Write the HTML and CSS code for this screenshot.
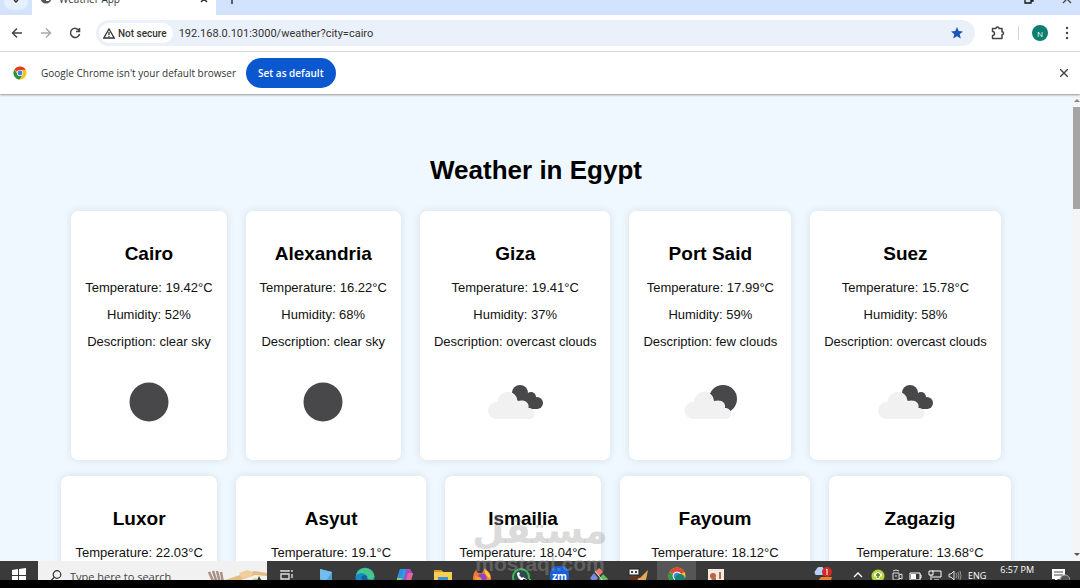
FILE: index.html
```html
<!DOCTYPE html>
<html lang="en">
<head>
    <meta charset="UTF-8">
    <title>Weather App</title>
    <link rel="stylesheet" href="styles.css">
</head>
<body>
    <div class="tab-strip">
        <button class="tab-search" aria-label="Search tabs"><svg width="10" height="6" viewBox="0 0 10 6"><path d="M3 0l2 2 2-2" fill="none" stroke="#333" stroke-width="1.5"/></svg></button>
        <div class="tab">
            <svg class="tab-icon" width="12" height="12" viewBox="0 0 12 12"><circle cx="6" cy="6" r="5.5" fill="#555"/><path d="M6 1l4 2-1 3-3-1zM6 6l4 0-1 3-3 0z" fill="#fff"/></svg>
            <span class="tab-title">Weather App</span>
            <button class="tab-close" aria-label="Close tab"><svg width="8" height="8" viewBox="0 0 8 8"><path d="M1 1l6 6M7 1l-6 6" stroke="#333" stroke-width="1.5"/></svg></button>
        </div>
        <button class="new-tab" aria-label="New tab"><svg width="10" height="10" viewBox="0 0 10 10"><path d="M5 0v10M0 5h10" stroke="#333" stroke-width="1.5"/></svg></button>
        <div class="window-buttons">
            <button aria-label="Restore"><svg width="10" height="10" viewBox="0 0 10 10"><path d="M1 3h6v6H1zM3 3V1h6v6H7" fill="none" stroke="#111" stroke-width="1.3"/></svg></button>
            <button aria-label="Close"><svg width="10" height="10" viewBox="0 0 10 10"><path d="M1 1l8 8M9 1L1 9" stroke="#444" stroke-width="1.3"/></svg></button>
        </div>
    </div>

    <div class="toolbar">
        <button aria-label="Back"><svg width="12" height="12" viewBox="0 0 12 12"><path d="M11 6H2M6 1.5L1.5 6 6 10.5" fill="none" stroke="#444" stroke-width="1.5"/></svg></button>
        <button aria-label="Forward"><svg width="12" height="12" viewBox="0 0 12 12"><path d="M1 6h9M6 1.5L10.5 6 6 10.5" fill="none" stroke="#aaa" stroke-width="1.5"/></svg></button>
        <button aria-label="Reload"><svg width="12" height="12" viewBox="0 0 12 12"><path d="M10 3.5A4.6 4.6 0 1 0 10.6 7M10.5 1v3.5H7" fill="none" stroke="#444" stroke-width="1.5"/></svg></button>
        <div class="omnibox">
            <button class="site-info">
                <svg width="12" height="11" viewBox="0 0 12 11"><path d="M6 1L11.2 10H.8z" fill="none" stroke="#333" stroke-width="1.3"/><path d="M6 4v3M6 7.8v1.2" stroke="#333" stroke-width="1.3"/></svg>
                Not secure
            </button>
            <input class="url" type="text" aria-label="Address" value="192.168.0.101:3000/weather?city=cairo">
            <button aria-label="Bookmark"><svg width="12" height="12" viewBox="0 0 12 12"><path d="M6 0l1.7 4.1 4.3.3-3.3 2.8 1.1 4.3L6 9.2l-3.8 2.3 1.1-4.3L0 4.4l4.3-.3z" fill="#1a56b8"/></svg></button>
        </div>
        <button aria-label="Extensions"><svg width="14" height="14" viewBox="0 0 14 14"><path d="M1.5 2.5H5a1.5 1.5 0 0 1 3 0h3v3.2a1.5 1.5 0 0 1 0 3V12.5H1.5V9.500a2 2 0 0 0 0-4z" fill="none" stroke="#444" stroke-width="1.5" stroke-linejoin="round"/></svg></button>
        <span class="divider"></span>
        <button class="avatar" aria-label="Profile">N</button>
        <button aria-label="Menu"><svg width="4" height="14" viewBox="0 0 4 14"><circle cx="2" cy="2" r="1.2" fill="#444"/><circle cx="2" cy="7" r="1.2" fill="#444"/><circle cx="2" cy="12" r="1.2" fill="#444"/></svg></button>
    </div>

    <div class="infobar">
        <svg width="14" height="14" viewBox="0 0 14 14"><circle cx="7" cy="7" r="6.5" fill="#fbc116"/><path d="M7 7L1.4 3.7A6.5 6.5 0 0 1 12.6 3.7L7 4z" fill="#e33b2e"/><path d="M1.4 3.7A6.5 6.5 0 0 0 6.5 13.5L9.6 8.5 4.4 8.5z" fill="#229342"/><circle cx="7" cy="7" r="3.1" fill="#fff"/><circle cx="7" cy="7" r="2.4" fill="#3f7de8"/></svg>
        <span class="infobar-text">Google Chrome isn't your default browser</span>
        <button class="default-btn">Set as default</button>
        <button class="infobar-close" aria-label="Dismiss"><svg width="8" height="8" viewBox="0 0 8 8"><path d="M0 0l8 8M8 0L0 8" stroke="#444" stroke-width="1.4"/></svg></button>
    </div>

    <div class="viewport">
        <main class="page">
            <h1>Weather in Egypt</h1>
            <div class="row">
                <div class="card">
                    <h2>Cairo</h2>
                    <p>Temperature: 19.42°C</p>
                    <p>Humidity: 52%</p>
                    <p>Description: clear sky</p>
                    <svg class="weather-icon" viewBox="0 0 82 82"><circle cx="41" cy="41" r="19.5" fill="#48484a"/></svg>
                </div>
                <div class="card">
                    <h2>Alexandria</h2>
                    <p>Temperature: 16.22°C</p>
                    <p>Humidity: 68%</p>
                    <p>Description: clear sky</p>
                    <svg class="weather-icon" viewBox="0 0 82 82"><circle cx="41" cy="41" r="19.5" fill="#48484a"/></svg>
                </div>
                <div class="card">
                    <h2>Giza</h2>
                    <p>Temperature: 19.41°C</p>
                    <p>Humidity: 37%</p>
                    <p>Description: overcast clouds</p>
                    <svg class="weather-icon" viewBox="0 0 82 82"><g fill="#48484a"><circle cx="46" cy="32" r="8"/><circle cx="57" cy="36" r="5"/><circle cx="63" cy="42" r="6"/><path d="M42 32h16l6 16H46z"/></g><path d="M22.500 58a8.500 8.500 0 0 1 0-17l1 0c0-9 13-15 19-5l1 4c8-2 12 2 11 7 8 0 8 11 0 11z" fill="#f1f1f1"/></svg>
                </div>
                <div class="card">
                    <h2>Port Said</h2>
                    <p>Temperature: 17.99°C</p>
                    <p>Humidity: 59%</p>
                    <p>Description: few clouds</p>
                    <svg class="weather-icon" viewBox="0 0 82 82"><circle cx="54" cy="38" r="14" fill="#48484a"/><path d="M24 58a8.500 8.500 0 0 1 0-17l1 0c0-9 13-15 19-5l1 4c8-2 12 2 11 7 8 0 8 11 0 11z" fill="#f1f1f1"/></svg>
                </div>
                <div class="card">
                    <h2>Suez</h2>
                    <p>Temperature: 15.78°C</p>
                    <p>Humidity: 58%</p>
                    <p>Description: overcast clouds</p>
                    <svg class="weather-icon" viewBox="0 0 82 82"><g fill="#48484a"><circle cx="46" cy="32" r="8"/><circle cx="57" cy="36" r="5"/><circle cx="63" cy="42" r="6"/><path d="M42 32h16l6 16H46z"/></g><path d="M22.500 58a8.500 8.500 0 0 1 0-17l1 0c0-9 13-15 19-5l1 4c8-2 12 2 11 7 8 0 8 11 0 11z" fill="#f1f1f1"/></svg>
                </div>
            </div>
            <div class="row">
                <div class="card">
                    <h2>Luxor</h2>
                    <p>Temperature: 22.03°C</p>
                    <p>Description: clear sky</p>
                </div>
                <div class="card">
                    <h2>Asyut</h2>
                    <p>Temperature: 19.1°C</p>
                    <p>Description: overcast clouds</p>
                </div>
                <div class="card">
                    <h2>Ismailia</h2>
                    <p>Temperature: 18.04°C</p>
                    <p>Description: clear sky</p>
                </div>
                <div class="card">
                    <h2>Fayoum</h2>
                    <p>Temperature: 18.12°C</p>
                    <p>Description: overcast clouds</p>
                </div>
                <div class="card">
                    <h2>Zagazig</h2>
                    <p>Temperature: 13.68°C</p>
                    <p>Description: broken clouds</p>
                </div>
            </div>
        </main>
        <div class="scrollbar">
            <svg width="7" height="5" viewBox="0 0 7 5"><path d="M1 4l3-3 3 3z" fill="#888"/></svg>
            <div class="thumb"></div>
            <svg width="7" height="5" viewBox="0 0 7 5"><path d="M1 1l3 3 3-3z" fill="#555"/></svg>
        </div>
    </div>

    <div class="taskbar">
        <button class="start" aria-label="Start"><svg width="14" height="14" viewBox="0 0 14 14"><path d="M0 2l6-1v6H0zM7 1l7-1v7H7zM0 8h6v6H0zM7 8h7v6H7z" fill="#fff"/></svg></button>
        <div class="search">
            <svg width="12" height="12" viewBox="0 0 12 12"><circle cx="7" cy="4.5" r="3.8" fill="none" stroke="#333" stroke-width="1.2"/><path d="M4.3 7.3L0 11.5" stroke="#333" stroke-width="1.2"/></svg>
            <input type="text" aria-label="Search" placeholder="Type here to search">
            <svg width="60" height="14" viewBox="0 0 60 14"><path d="M2 3l5 11M6 2l4 12M10 2l3 12M14 3l2 11" stroke="#a98f84" stroke-width="2.5"/><path d="M18 11L36 5l12-3 12 2v3L48 6 34 11l-10 3z" fill="#e5bd83"/><path d="M32 4l8-3 6 2-2 4-9 3z" fill="#efcf9c"/><path d="M40 14l8-5 12 5z" fill="#d9c28c"/><path d="M49 14l3-7 4 7z" fill="#3d4526"/></svg>
        </div>
        <div class="apps">
            <button aria-label="Task view"><svg width="14" height="14" viewBox="0 0 14 14"><path d="M1 1v1h8V1M1 5h8v5H1zM1 14v-2h8v2M12 1v2M12 5v4M12 11v3" fill="none" stroke="#ddd" stroke-width="1.4"/></svg></button>
            <button aria-label="Remote desktop"><svg width="14" height="16" viewBox="0 0 14 16"><path d="M1 1l12 3v12L1 12z" fill="#4b9fdd"/><path d="M1 1l12 3-6 9-6-2z" fill="#72bdec"/></svg></button>
            <button aria-label="Edge"><svg width="20" height="18" viewBox="0 0 20 18"><circle cx="10" cy="10" r="9.5" fill="#1689ce"/><path d="M1 8a9.500 9.500 0 0 1 18.500 1c0 4-5 4-7 3 1-5-6-8-11.500-4z" fill="#46c78a"/><path d="M7 9c4-2 6 0 5 3l7 2H8c-2-1-2-4-1-5z" fill="#155f9d"/></svg></button>
            <button aria-label="Copilot"><svg width="18" height="16" viewBox="0 0 18 16"><path d="M5 1h7L8 16H1z" fill="#25a4d9"/><path d="M5 1h4L6 10H2z" fill="#318ce5"/><path d="M11 1h4l3 5-3 10H8z" fill="#a54acf"/><path d="M13 5h5l-3 11h-5z" fill="#e66691"/><path d="M2 10h5l-2 6H2z" fill="#9dcc54"/></svg></button>
            <button aria-label="File Explorer"><svg width="18" height="15" viewBox="0 0 18 15"><path d="M0 1h7l2 2h9v12H0z" fill="#f8ce54"/><path d="M0 1h7l2 2H0z" fill="#d99926"/><path d="M4 8h10v7H4z" fill="#3e91d6"/></svg></button>
            <button aria-label="Firefox"><svg width="18" height="16" viewBox="0 0 18 16"><path d="M9 5l3-5c2 3 6 4 6 10 0 8-17 9-18 1C0 7 1 4 3 2l2 3z" fill="#f57635"/><path d="M11 1c3 2 7 5 6 10L13 7z" fill="#ffce45"/><circle cx="9" cy="10" r="4.5" fill="#8648c4"/><path d="M2 8l5 1 3 4-7 2z" fill="#ff9830"/></svg></button>
            <button aria-label="WhatsApp"><svg width="20" height="16" viewBox="0 0 20 16"><circle cx="10" cy="9" r="8" fill="#32494b" stroke="#37b858" stroke-width="2"/><path d="M6 5c0 5 3 8 8 8l1-2-3-2-1 1-3-3 1-1-1-2z" fill="#fff"/><path d="M12 11h8v5h-8z" fill="#333"/><path d="M14 12h2v3M18 12h2v3" fill="none" stroke="#fff"/></svg></button>
            <button class="zoom-app" aria-label="Zoom">zm</button>
            <button aria-label="Android tools"><svg width="18" height="16" viewBox="0 0 18 16"><path d="M5 4l4-4 4 4-4 4z" fill="#ed7b67"/><path d="M0 10l4-5 4 5-4 5z" fill="#738edc"/><path d="M9 11l4-5 5 5-4 5z" fill="#67b860"/><path d="M5 3l8 10" stroke="#ddd"/></svg></button>
            <button aria-label="Paint tool"><svg width="20" height="16" viewBox="0 0 20 16"><path d="M3 7l9 3 8-8-2 10-9 4z" fill="#e8a957"/><path d="M2 7l9 2-3 6-6-4z" fill="#673319"/><path d="M1 1h10v6H1z" fill="#eee" stroke="#222"/><path d="M3 3h2v2H3zM7 3h2v2H7z" fill="#444"/></svg></button>
            <button class="active" aria-label="Chrome"><svg width="18" height="18" viewBox="0 0 18 18"><circle cx="9" cy="9" r="8.5" fill="#f4c42d"/><path d="M9 9L1.5 5A8.5 8.5 0 0 1 16.5 5z" fill="#df4836"/><path d="M1.5 5A8.5 8.5 0 0 0 8 17.5l3-6z" fill="#299b4b"/><circle cx="9" cy="9" r="4" fill="#438bdc" stroke="#fff"/><circle cx="12" cy="12" r="5" fill="#168174"/></svg></button>
            <button aria-label="Camera app"><svg width="18" height="14" viewBox="0 0 18 14"><path d="M1 0h16v14H1z" fill="#f6e9e2"/><circle cx="6" cy="7" r="3" fill="#ba6443"/><path d="M5 9h4v5H4zM12 3h2v7h-2z" fill="#b76c50"/></svg></button>
        </div>
        <div class="tray">
            <svg width="20" height="16" viewBox="0 0 20 16"><path d="M4 15l4-5h11l-2 6H8z" fill="#e98332"/><path d="M3 8a3 3 0 0 1 0-5c2-5 8-4 8 0 4 0 4 5 0 5z" fill="#b6d0ff"/><circle cx="14" cy="5" r="5" fill="#cf2b26"/><path d="M14 2v6M13 3l1-1" stroke="#fff"/></svg>
            <svg class="tray-arrow" width="10" height="8" viewBox="0 0 10 8"><path d="M1 6l4-4 4 4" fill="none" stroke="#fff" stroke-width="1.3"/></svg>
            <svg width="14" height="12" viewBox="0 0 14 12"><circle cx="7" cy="7" r="6.5" fill="#b4d636"/><path d="M7 3v7M3 6h8" stroke="#fff" stroke-width="3"/><path d="M7 4v5M5 6h4" stroke="#477c1f" stroke-width="1.5"/></svg>
            <svg width="12" height="12" viewBox="0 0 12 12"><path d="M2 4h6v7H2zM8 6l3-1v5L8 9M2 2q3-2 6 0M4 7h2" fill="none" stroke="#ddd"/></svg>
            <svg width="13" height="12" viewBox="0 0 13 12"><path d="M1 4h10v7H1zM11 6h1v3h-1" fill="none" stroke="#fff"/><path d="M2 5h5v5H2z" fill="#fff"/></svg>
            <svg width="14" height="12" viewBox="0 0 14 12"><path d="M4 2h9v6H4M1 2h4v4H1zM3 6v5M6 11h5" fill="none" stroke="#fff"/></svg>
            <svg width="14" height="12" viewBox="0 0 14 12"><path d="M1 5h2l3-3v9L3 8H1z" fill="none" stroke="#ddd"/><path d="M8 4q2 3 0 5M10 3q2 4 0 7M12 2q2 5 0 9" fill="none" stroke="#999"/></svg>
            <span class="lang">ENG</span>
            <time>6:57 PM</time>
            <svg width="18" height="14" viewBox="0 0 18 14"><path d="M0 1h13v10H6l-3 3v-3H0z" fill="#fff"/><path d="M2 4h9M2 7h9" stroke="#444"/><circle cx="13" cy="12" r="5" fill="#555" stroke="#aaa"/></svg>
        </div>
    </div>

    <div class="watermark">
        <span class="watermark-ar" lang="ar" dir="rtl">مستقل</span>
        <span class="watermark-en">mostaql.com</span>
    </div>
</body>
</html>
```

FILE: styles.css
```css
* {
	box-sizing: border-box;
}

body {
	margin: 0;
	height: 100vh;
	display: flex;
	flex-direction: column;
	overflow: hidden;
	position: relative;
	background-color: #000;
	font-family: "Open Sans", "Noto Sans", sans-serif;
	font-size: 11px;
	color: #333;
}

button {
	display: flex;
	align-items: center;
	justify-content: center;
	flex-shrink: 0;
	border: none;
	background: none;
	padding: 0;
	font-family: inherit;
	font-size: inherit;
	color: inherit;
}

svg {
	display: block;
	flex-shrink: 0;
}

input {
	border: none;
	background: none;
	padding: 0;
	min-width: 0;
	font-family: inherit;
	color: inherit;
}

/* browser */
.tab-strip {
	height: 15px;
	flex-shrink: 0;
	display: flex;
	align-items: flex-start;
	background-color: #d3e3fd;
	overflow: hidden;
}

.tab-search {
	width: 24px;
	height: 10px;
	margin-left: 4px;
	align-items: flex-start;
	border-radius: 0 0 8px 8px;
	background-color: #e6effd;
}

.tab {
	width: 184px;
	height: 15px;
	margin-left: 4px;
	padding: 0 8px;
	display: flex;
	align-items: flex-start;
	background-color: #fff;
}

.tab-icon {
	margin-top: -8px;
}

.tab-title {
	flex: 1;
	margin: -8px 0 0 7px;
	line-height: 14px;
	font-size: 10px;
}

.tab-close {
	margin-top: -5px;
}

.new-tab {
	margin: -6px 0 0 11px;
}

.window-buttons {
	display: flex;
	gap: 28px;
	margin: -6px 8px 0 auto;
}

.toolbar {
	height: 37px;
	flex-shrink: 0;
	display: flex;
	align-items: center;
	gap: 17px;
	padding: 0 11px;
	background-color: #fff;
	border-bottom: 1px solid #dcdfe3;
}

.omnibox {
	flex: 1;
	height: 26px;
	display: flex;
	align-items: center;
	margin: 0 -1px 0 -2px;
	padding: 0 12px 0 3px;
	border-radius: 13px;
	background-color: #ebf1fa;
}

.site-info {
	height: 20px;
	gap: 3px;
	padding: 0 6px 0 4px;
	border-radius: 10px;
	background-color: #fff;
	font-family: Roboto, sans-serif;
	font-size: 10px;
	font-weight: 500;
}

.url {
	flex: 1;
	margin-left: 6px;
	font-family: Roboto, sans-serif;
	font-size: 11px;
}

.divider {
	width: 1px;
	height: 14px;
	margin: 0 -4px;
	background-color: #c9d7ea;
}

.avatar {
	width: 16px;
	height: 16px;
	border-radius: 50%;
	background-color: #0d7f6e;
	color: #fff;
	font-size: 8px;
}

.infobar {
	height: 42px;
	flex-shrink: 0;
	display: flex;
	align-items: center;
	padding: 0 12px 0 13px;
	background-color: #fff;
	position: relative;
	box-shadow: 0 1px 2px rgba(0, 0, 0, 0.4);
}

.infobar-text {
	margin: 0 10px 0 14px;
	font-size: 10px;
}

.default-btn {
	height: 30px;
	padding: 0 12px;
	border-radius: 15px;
	background-color: #0b57d0;
	color: #fff;
	font-size: 10px;
	font-weight: 600;
}

.infobar-close {
	margin-left: auto;
}

/* weather page */
.viewport {
	flex: 1;
	min-height: 0;
	display: flex;
	overflow: hidden;
	background-color: #f0f8ff;
}

.page {
	flex: 1;
	padding-top: 61px;
	font-family: "Liberation Sans", Arial, sans-serif;
	font-size: 13px;
	line-height: 15px;
	color: #111;
	text-align: center;
}

h1 {
	margin: 0 0 26px;
	font-size: 26px;
	line-height: 30px;
	color: #000;
}

.row {
	display: flex;
	justify-content: center;
	gap: 19px;
	margin-bottom: 16px;
}

.card {
	padding: 16px 14px;
	border-radius: 7px;
	background-color: #fff;
	box-shadow: 0 0 8px rgba(0, 0, 0, 0.1);
}

.card h2 {
	margin: 16px 0 15px;
	font-size: 19px;
	line-height: 22px;
	color: #000;
}

.card p {
	margin: 0 0 12px;
}

.weather-icon {
	width: 82px;
	height: 82px;
	margin: 0 auto 1px;
}

.scrollbar {
	width: 8px;
	display: flex;
	flex-direction: column;
	align-items: flex-end;
	padding: 4px 0;
	background-color: #f3f5f7;
}

.thumb {
	width: 7px;
	height: 102px;
	margin: 4px 0 auto;
	background-color: #a5a5a5;
}

/* taskbar */
.taskbar {
	height: 19px;
	flex-shrink: 0;
	display: flex;
	align-items: flex-start;
	margin-bottom: 8px;
	overflow: hidden;
	background-color: #3a3a3a;
	color: #fff;
}

.start {
	width: 38px;
	height: 28px;
}

.search {
	width: 229px;
	height: 30px;
	display: flex;
	align-items: center;
	flex-shrink: 0;
	padding-left: 12px;
	background-color: #f1f1f1;
	color: #333;
}

.search input {
	flex: 1;
	margin-left: 8px;
	font-size: 11px;
}

.search input::placeholder {
	color: #444;
	opacity: 1;
}

.apps {
	display: flex;
}

.apps button {
	width: 39px;
	height: 30px;
}

.apps .active {
	background-color: #565656;
}

.apps .zoom-app {
	width: 19px;
	height: 19px;
	margin: 5px 10px;
	border-radius: 8px;
	background-color: #1762dc;
	font-size: 10px;
	font-weight: 700;
}

.tray {
	height: 28px;
	display: flex;
	align-items: center;
	gap: 6px;
	margin-left: auto;
	padding-right: 10px;
	font-size: 9px;
}

.tray-arrow {
	margin: 0 2px 0 14px;
}

.tray time {
	height: 24px;
	margin: 0 12px 0 8px;
	line-height: 14px;
}

.watermark {
	position: absolute;
	left: 50%;
	bottom: 8px;
	width: 136px;
	height: 72px;
	margin-left: -68px;
	display: flex;
	flex-direction: column;
	align-items: center;
	color: rgba(160, 160, 160, 0.4);
	font-weight: 700;
	pointer-events: none;
}

.watermark-ar {
	font-family: "DejaVu Sans", sans-serif;
	font-size: 37px;
	line-height: 46px;
}

.watermark-en {
	font-family: "Liberation Sans", Arial, sans-serif;
	font-size: 21px;
	line-height: 20px;
}
```
